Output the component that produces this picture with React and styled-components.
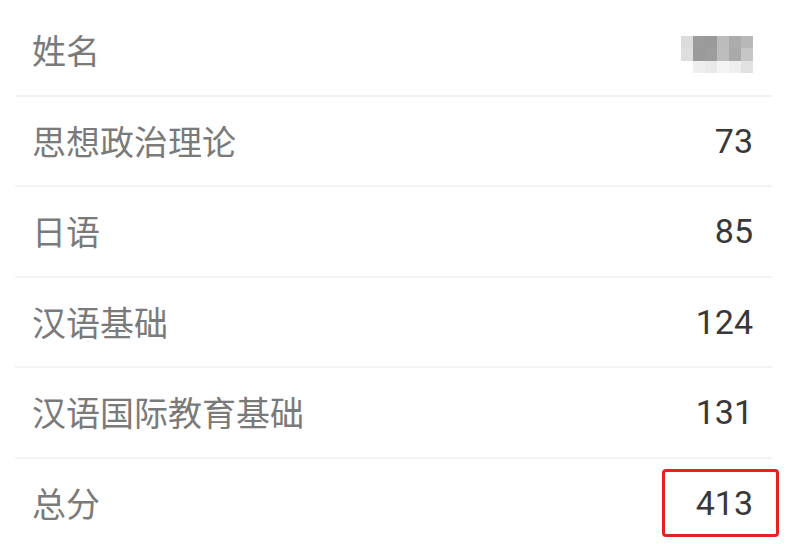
import React from "react";
import styled, { createGlobalStyle } from "styled-components";

const Global = createGlobalStyle`
  html, body { margin: 0; padding: 0; background: #fff; }
  body { font-family: "Noto Sans CJK SC", "Noto Sans", sans-serif; }
`;

const List = styled.div`
  width: 757px;
  margin-left: 15px;
  padding-top: 6px;
  display: flex;
  flex-direction: column;
`;

const Row = styled.div`
  display: flex;
  align-items: center;
  justify-content: space-between;
  height: 88.5px;
  padding: 0 19px 0 17px;
  border-bottom: ${(p) => (p.$last ? "none" : "2px solid #f3f3f3")};
`;

const Label = styled.span`
  font-family: "Noto Sans CJK SC", sans-serif;
  font-size: 34px;
  color: #7a7a7a;
  line-height: 1;
`;

const Value = styled.span`
  position: relative;
  font-family: Roboto, "Noto Sans", sans-serif;
  font-size: 34px;
  color: #383838;
  line-height: 1;
`;

const Highlight = styled.span`
  position: absolute;
  left: -34px;
  right: -26px;
  top: -17px;
  bottom: -17px;
  border: 3px solid #e5231d;
  border-radius: 4px;
`;

const Mosaic = styled.div`
  display: grid;
  grid-template-columns: repeat(6, 12px);
  grid-auto-rows: 12.5px;
  margin-top: 8px;
`;

const Cell = styled.span`
  background: ${(p) => p.$c};
`;

const mosaic = [
  "#dcdcdc", "#9c9c9c", "#9a9a9a", "#bcbcbc", "#acacac", "#b8b8b8",
  "#dedede", "#9a9a9a", "#9d9d9d", "#bdbdbd", "#a9a9a9", "#c6c6c6",
  "#ffffff", "#eeeeee", "#e9e9e9", "#f4f4f4", "#eeeeee", "#e2e2e2",
];

const rows = [
  ["思想政治理论", "73"],
  ["日语", "85"],
  ["汉语基础", "124"],
  ["汉语国际教育基础", "131"],
];

export default function App() {
  return (
    <>
      <Global />
      <List>
        <Row>
          <Label>姓名</Label>
          <Mosaic>
            {mosaic.map((c, i) => (
              <Cell key={i} $c={c} />
            ))}
          </Mosaic>
        </Row>
        {rows.map(([l, v]) => (
          <Row key={l}>
            <Label>{l}</Label>
            <Value>{v}</Value>
          </Row>
        ))}
        <Row $last>
          <Label>总分</Label>
          <Value>
            413
            <Highlight />
          </Value>
        </Row>
      </List>
    </>
  );
}
